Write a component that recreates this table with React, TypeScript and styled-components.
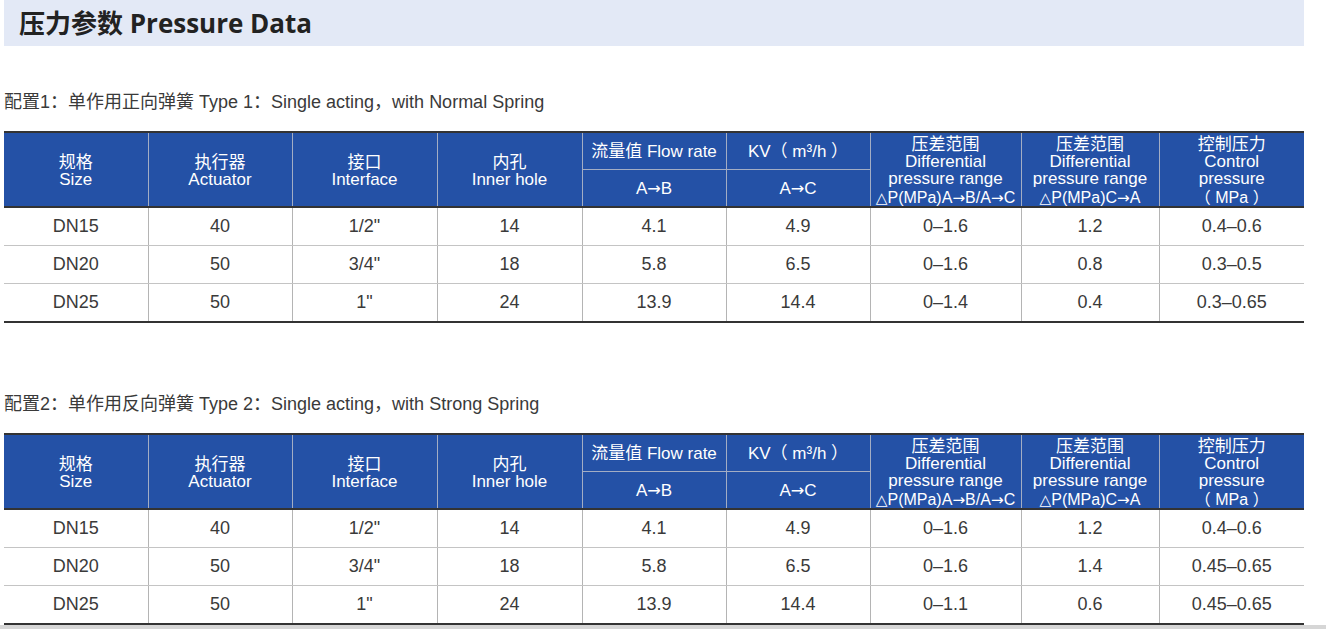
import React from 'react';
import styled, { createGlobalStyle } from 'styled-components';

const GlobalStyle = createGlobalStyle`
  html, body { margin: 0; padding: 0; background: #fff; }
  body { font-family: "Liberation Sans", "Noto Sans CJK SC", sans-serif; color: #333; }
`;

const Page = styled.div`
  width: 1326px;
  height: 629px;
  overflow: hidden;
  display: flex;
  flex-direction: column;
`;

const Content = styled.div`
  margin-left: 4px;
  width: 1300px;
  display: flex;
  flex-direction: column;
`;

const TitleBar = styled.div`
  height: 46px;
  background: #e3e9f6;
  display: flex;
  align-items: center;
  padding-left: 15px;
  box-sizing: border-box;
`;

const Title = styled.h1`
  margin: 0;
  font-family: "Open Sans", "Noto Sans CJK SC", sans-serif;
  font-weight: 700;
  font-size: 26px;
  line-height: 1;
  color: #222;
`;

const Caption = styled.div<{ $gap: number }>`
  margin-top: ${(p) => p.$gap}px;
  margin-bottom: 18px;
  font-size: 18px;
  line-height: 22px;
  color: #3a3a3a;
  white-space: nowrap;
`;

const Table = styled.table`
  width: 1300px;
  table-layout: fixed;
  border-collapse: collapse;
  border-top: 2px solid #333;
`;

const Th = styled.th<{ $first?: boolean; $split?: boolean; $tall?: boolean }>`
  background: #2451a6;
  color: #fff;
  font-weight: 400;
  font-size: 17px;
  line-height: 17px;
  padding: ${(p) => (p.$tall ? '2px 0 0' : '0')};
  height: 36px;
  text-align: center;
  vertical-align: middle;
  white-space: nowrap;
  border-left: ${(p) => (p.$first ? 'none' : '1px solid #a3adc4')};
  border-bottom: ${(p) => (p.$split ? '1px solid #a3adc4' : '2px solid #333')};
`;

const Line = styled.span<{ $small?: boolean }>`
  display: block;
  font-size: ${(p) => (p.$small ? '16px' : '17px')};
  line-height: ${(p) => (p.$small ? '15px' : '17px')};
  margin-top: ${(p) => (p.$small ? '3px' : '0')};
`;

const Sym = styled.span`
  font-family: "DejaVu Sans", sans-serif;
  font-size: 0.95em;
`;

const Td = styled.td<{ $first?: boolean; $last?: boolean }>`
  padding: 0;
  height: 37px;
  font-size: 18px;
  color: #3a3a3a;
  text-align: center;
  vertical-align: middle;
  border-left: ${(p) => (p.$first ? 'none' : '1px solid #b4b4b4')};
  border-bottom: ${(p) => (p.$last ? '2px solid #333' : '1px solid #c4c4c4')};
`;

const BottomBand = styled.div`
  margin-top: auto;
  height: 4px;
  width: 100%;
  background: #d6d6d6;
`;

const widths = [144, 144, 145, 145, 144, 144, 151, 138, 145];

type Row = string[];

const table1: Row[] = [
  ['DN15', '40', '1/2"', '14', '4.1', '4.9', '0–1.6', '1.2', '0.4–0.6'],
  ['DN20', '50', '3/4"', '18', '5.8', '6.5', '0–1.6', '0.8', '0.3–0.5'],
  ['DN25', '50', '1"', '24', '13.9', '14.4', '0–1.4', '0.4', '0.3–0.65'],
];

const table2: Row[] = [
  ['DN15', '40', '1/2"', '14', '4.1', '4.9', '0–1.6', '1.2', '0.4–0.6'],
  ['DN20', '50', '3/4"', '18', '5.8', '6.5', '0–1.6', '1.4', '0.45–0.65'],
  ['DN25', '50', '1"', '24', '13.9', '14.4', '0–1.1', '0.6', '0.45–0.65'],
];

function DataTable({ rows }: { rows: Row[] }) {
  return (
    <Table>
      <colgroup>
        {widths.map((w, i) => (
          <col key={i} style={{ width: w }} />
        ))}
      </colgroup>
      <thead>
        <tr>
          <Th $first $tall rowSpan={2}>
            <Line>规格</Line>
            <Line>Size</Line>
          </Th>
          <Th $tall rowSpan={2}>
            <Line>执行器</Line>
            <Line>Actuator</Line>
          </Th>
          <Th $tall rowSpan={2}>
            <Line>接口</Line>
            <Line>Interface</Line>
          </Th>
          <Th $tall rowSpan={2}>
            <Line>内孔</Line>
            <Line>Inner hole</Line>
          </Th>
          <Th $split>流量值 Flow rate</Th>
          <Th $split>KV（ m³/h ）</Th>
          <Th $tall rowSpan={2}>
            <Line>压差范围</Line>
            <Line>Differential</Line>
            <Line>pressure range</Line>
            <Line $small>
              <Sym>△</Sym>P(MPa)A<Sym>→</Sym>B/A<Sym>→</Sym>C
            </Line>
          </Th>
          <Th $tall rowSpan={2}>
            <Line>压差范围</Line>
            <Line>Differential</Line>
            <Line>pressure range</Line>
            <Line $small>
              <Sym>△</Sym>P(MPa)C<Sym>→</Sym>A
            </Line>
          </Th>
          <Th $tall rowSpan={2}>
            <Line>控制压力</Line>
            <Line>Control</Line>
            <Line>pressure</Line>
            <Line $small>（ MPa ）</Line>
          </Th>
        </tr>
        <tr>
          <Th>
            A<Sym>→</Sym>B
          </Th>
          <Th>
            A<Sym>→</Sym>C
          </Th>
        </tr>
      </thead>
      <tbody>
        {rows.map((r, ri) => (
          <tr key={ri}>
            {r.map((c, ci) => (
              <Td key={ci} $first={ci === 0} $last={ri === rows.length - 1}>
                {c}
              </Td>
            ))}
          </tr>
        ))}
      </tbody>
    </Table>
  );
}

export default function App() {
  return (
    <Page>
      <GlobalStyle />
      <Content>
        <TitleBar>
          <Title>压力参数 Pressure Data</Title>
        </TitleBar>
        <Caption $gap={45}>配置1：单作用正向弹簧 Type 1：Single acting，with Normal Spring</Caption>
        <DataTable rows={table1} />
        <Caption $gap={70}>配置2：单作用反向弹簧 Type 2：Single acting，with Strong Spring</Caption>
        <DataTable rows={table2} />
      </Content>
      <BottomBand />
    </Page>
  );
}
